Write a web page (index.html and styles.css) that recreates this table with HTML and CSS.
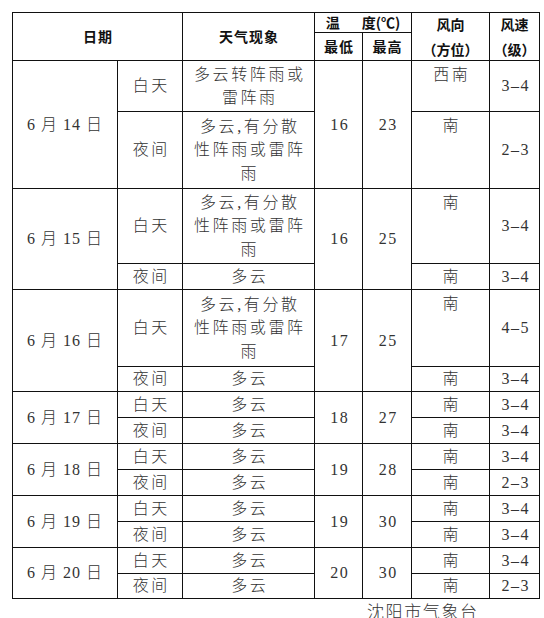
FILE: index.html
```html
<!DOCTYPE html>
<html lang="zh-CN">
<head>
<meta charset="utf-8">
<title>天气预报</title>
<link rel="stylesheet" href="styles.css">
</head>
<body>
<div class="page">
  <div class="table">
    <div class="c h rs2 cs2">日期</div>
    <div class="c h rs2">天气现象</div>
    <div class="c h cs2 temp"><span>温</span><span class="gap"></span><span>度(℃)</span></div>
    <div class="c h rs2 hstack"><span>风向</span><span>（方位）</span></div>
    <div class="c h rs2 hstack"><span>风速</span><span>（级）</span></div>
    <div class="c h">最低</div>
    <div class="c h">最高</div>

    <div class="c date rs2">6 月 14 日</div>
    <div class="c">白天</div>
    <div class="c">多云转阵雨或<br>雷阵雨</div>
    <div class="c num rs2">16</div>
    <div class="c num rs2">23</div>
    <div class="c dir">西南</div>
    <div class="c num">3–4</div>
    <div class="c">夜间</div>
    <div class="c">多云,有分散<br>性阵雨或雷阵<br>雨</div>
    <div class="c dir">南</div>
    <div class="c num">2–3</div>

    <div class="c date rs2">6 月 15 日</div>
    <div class="c">白天</div>
    <div class="c">多云,有分散<br>性阵雨或雷阵<br>雨</div>
    <div class="c num rs2">16</div>
    <div class="c num rs2">25</div>
    <div class="c dir">南</div>
    <div class="c num">3–4</div>
    <div class="c">夜间</div>
    <div class="c">多云</div>
    <div class="c">南</div>
    <div class="c num">3–4</div>

    <div class="c date rs2">6 月 16 日</div>
    <div class="c">白天</div>
    <div class="c">多云,有分散<br>性阵雨或雷阵<br>雨</div>
    <div class="c num rs2">17</div>
    <div class="c num rs2">25</div>
    <div class="c dir">南</div>
    <div class="c num">4–5</div>
    <div class="c">夜间</div>
    <div class="c">多云</div>
    <div class="c">南</div>
    <div class="c num">3–4</div>

    <div class="c date rs2">6 月 17 日</div>
    <div class="c">白天</div>
    <div class="c">多云</div>
    <div class="c num rs2">18</div>
    <div class="c num rs2">27</div>
    <div class="c">南</div>
    <div class="c num">3–4</div>
    <div class="c">夜间</div>
    <div class="c">多云</div>
    <div class="c">南</div>
    <div class="c num">3–4</div>

    <div class="c date rs2">6 月 18 日</div>
    <div class="c">白天</div>
    <div class="c">多云</div>
    <div class="c num rs2">19</div>
    <div class="c num rs2">28</div>
    <div class="c">南</div>
    <div class="c num">3–4</div>
    <div class="c">夜间</div>
    <div class="c">多云</div>
    <div class="c">南</div>
    <div class="c num">2–3</div>

    <div class="c date rs2">6 月 19 日</div>
    <div class="c">白天</div>
    <div class="c">多云</div>
    <div class="c num rs2">19</div>
    <div class="c num rs2">30</div>
    <div class="c">南</div>
    <div class="c num">3–4</div>
    <div class="c">夜间</div>
    <div class="c">多云</div>
    <div class="c">南</div>
    <div class="c num">3–4</div>

    <div class="c date rs2">6 月 20 日</div>
    <div class="c">白天</div>
    <div class="c">多云</div>
    <div class="c num rs2">20</div>
    <div class="c num rs2">30</div>
    <div class="c">南</div>
    <div class="c num">3–4</div>
    <div class="c">夜间</div>
    <div class="c">多云</div>
    <div class="c">南</div>
    <div class="c num">2–3</div>
  </div>
  <div class="footer">沈阳市气象台</div>
</div>
</body>
</html>
```

FILE: styles.css
```css
html, body {
  margin: 0;
  padding: 0;
  background: #ffffff;
}

.page {
  padding: 12px 0 0 12px;
  font-family: "Liberation Serif", "Noto Sans CJK SC", serif;
  color: #333333;
}

.table {
  display: grid;
  grid-template-columns: 105px 65px 132px 48px 49px 78px 50px;
  grid-template-rows: 20px 28px 51px 77px 75px 26px 77px 25px 26px 26px 26px 26px 26px 26px 26px 25px;
  width: max-content;
  border-top: 1px solid #111;
  border-left: 1px solid #111;
}

.c {
  box-sizing: border-box;
  border-right: 1px solid #111;
  border-bottom: 1px solid #111;
  display: flex;
  align-items: center;
  justify-content: center;
  text-align: center;
  font-size: 16px;
  line-height: 23.5px;
  letter-spacing: 2.6px;
  padding-left: 2.6px;
  font-weight: 300;
}

.rs2 { grid-row: span 2; }
.cs2 { grid-column: span 2; }

.h {
  font-family: "Noto Sans CJK SC", sans-serif;
  font-weight: 700;
  font-size: 14px;
  letter-spacing: 1px;
  padding-left: 1px;
  color: #111;
}

.temp {
  letter-spacing: 0;
  padding-left: 0;
}

.gap {
  display: inline-block;
  width: 22px;
}

.hstack {
  flex-direction: column;
  justify-content: center;
  line-height: 25px;
  letter-spacing: 0;
  padding-left: 0;
}

.date {
  letter-spacing: 1px;
  padding-left: 0;
}

.num {
  letter-spacing: 1.5px;
}

.dir {
  align-items: flex-start;
  padding-top: 2px;
}

.footer {
  padding-left: 355px;
  padding-top: 1px;
  font-family: "Noto Sans CJK SC", sans-serif;
  font-weight: 300;
  font-size: 17px;
  letter-spacing: 1.6px;
  line-height: 22px;
  color: #333;
}
```
